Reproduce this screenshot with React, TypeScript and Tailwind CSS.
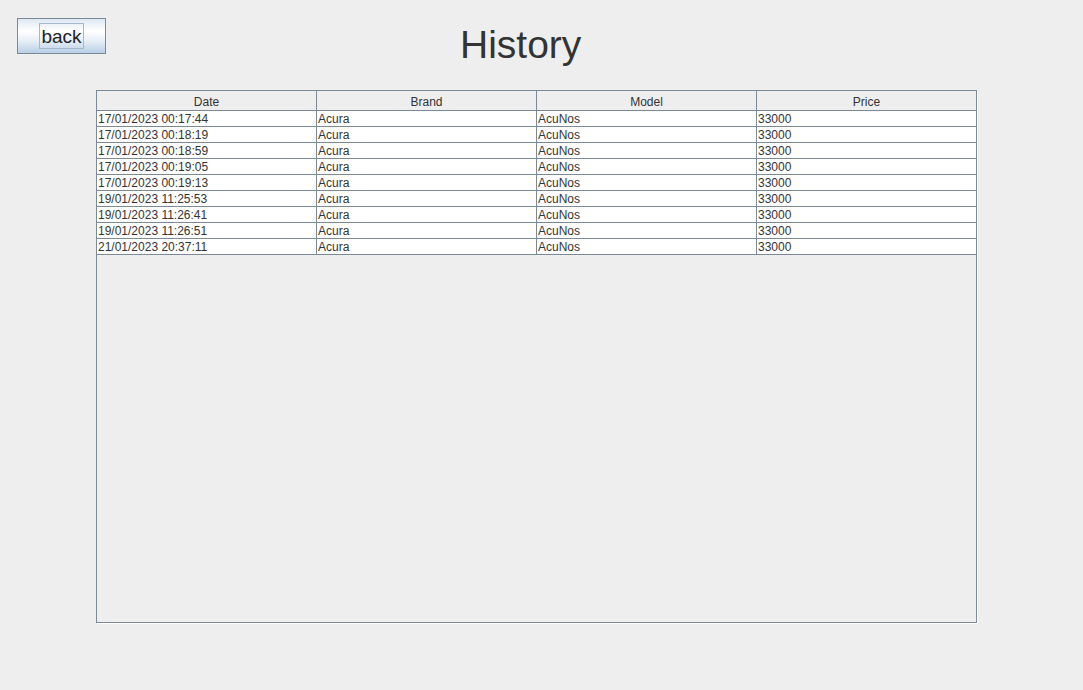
const rows = [
  "17/01/2023 00:17:44",
  "17/01/2023 00:18:19",
  "17/01/2023 00:18:59",
  "17/01/2023 00:19:05",
  "17/01/2023 00:19:13",
  "19/01/2023 11:25:53",
  "19/01/2023 11:26:41",
  "19/01/2023 11:26:51",
  "21/01/2023 20:37:11",
];

const headers = ["Date", "Brand", "Model", "Price"];

export default function App() {
  return (
    <div className="h-[690px] w-[1083px] bg-[#eeeeee] text-[#333333] font-['Liberation_Sans',Arial,sans-serif]">
      {/* top bar */}
      <div className="flex h-[90px] items-start">
        <button className="ml-[17px] mt-[18px] flex h-[36px] w-[89px] items-center justify-center border border-[#7a8a99] bg-[linear-gradient(to_bottom,#dde8f3_0%,#ffffff_35%,#e6eef7_65%,#b8cfe5_100%)]">
          <span className="flex h-[26px] items-center border border-[#a3b8cc] px-[1px] text-[19px] leading-none text-[#222222]">
            back
          </span>
        </button>
        <h1 className="ml-[354px] mt-[25px] text-[39px] leading-none font-normal text-[#333333]">
          History
        </h1>
      </div>

      {/* table */}
      <div className="ml-[96px] h-[533px] w-[881px] border border-[#7a8a99] shadow-[1px_1px_0_#ffffff]">
        <div className="grid grid-cols-[220px_220px_220px_219px] border-b border-[#7a8a99]">
          {headers.map((h, i) => (
            <div
              key={h}
              className={`flex h-[19px] items-center justify-center pt-[2px] text-[12px] leading-none ${
                i < 3 ? "border-r border-[#7a8a99]" : ""
              }`}
            >
              {h}
            </div>
          ))}
        </div>
        {rows.map((d) => (
          <div
            key={d}
            className="grid grid-cols-[220px_220px_220px_219px] border-b border-[#7a8a99] bg-white"
          >
            {[d, "Acura", "AcuNos", "33000"].map((c, i) => (
              <div
                key={i}
                className={`flex h-[15px] items-center pl-[1px] text-[12px] leading-none ${
                  i < 3 ? "border-r border-[#7a8a99]" : ""
                }`}
              >
                {c}
              </div>
            ))}
          </div>
        ))}
      </div>
    </div>
  );
}
